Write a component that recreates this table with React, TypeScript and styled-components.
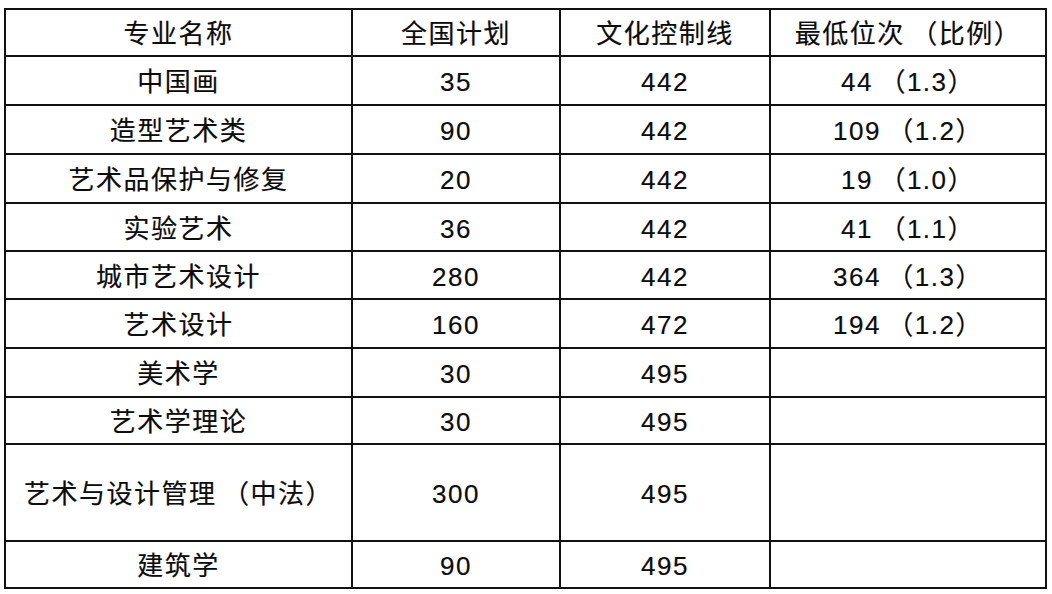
import styled, { createGlobalStyle } from "styled-components";

const GlobalStyle = createGlobalStyle`
  html, body {
    margin: 0;
    padding: 0;
    background: #fff;
  }
  body {
    font-family: "Liberation Sans", "Noto Sans CJK SC", sans-serif;
    color: #0c0c0c;
  }
`;

const Page = styled.div`
  padding: 8px 0 0 4px;
`;

const Table = styled.table`
  width: 1043px;
  table-layout: fixed;
  border-collapse: collapse;
  font-size: 26px;
  letter-spacing: 1.5px;
`;

const Row = styled.tr<{ $h: number }>`
  height: ${(p) => p.$h}px;
`;

const Cell = styled.td`
  border: 2px solid #111;
  padding: 3px 0 0;
  text-align: center;
  vertical-align: middle;
  white-space: nowrap;
  line-height: 1;
  -webkit-text-stroke: 0.2px #0c0c0c;
`;

const HeadCell = styled(Cell).attrs({ as: "th" })`
  font-weight: 400;
`;

const Paren = styled.span`
  margin-left: 0.25em;
`;

const Label = ({ text }: { text: string }) => {
  const i = text.indexOf("（");
  if (i < 0) return <>{text}</>;
  return (
    <>
      {text.slice(0, i)}
      <Paren>{text.slice(i)}</Paren>
    </>
  );
};

type Major = {
  name: string;
  plan: string;
  line: string;
  rank: string;
  h: number;
};

const columns = [347, 208, 210, 276];

const headers = ["专业名称", "全国计划", "文化控制线", "最低位次（比例）"];

const rows: Major[] = [
  { name: "中国画", plan: "35", line: "442", rank: "44（1.3）", h: 49 },
  { name: "造型艺术类", plan: "90", line: "442", rank: "109（1.2）", h: 49 },
  { name: "艺术品保护与修复", plan: "20", line: "442", rank: "19（1.0）", h: 49 },
  { name: "实验艺术", plan: "36", line: "442", rank: "41（1.1）", h: 48 },
  { name: "城市艺术设计", plan: "280", line: "442", rank: "364（1.3）", h: 48 },
  { name: "艺术设计", plan: "160", line: "472", rank: "194（1.2）", h: 49 },
  { name: "美术学", plan: "30", line: "495", rank: "", h: 49 },
  { name: "艺术学理论", plan: "30", line: "495", rank: "", h: 47 },
  { name: "艺术与设计管理（中法）", plan: "300", line: "495", rank: "", h: 97 },
  { name: "建筑学", plan: "90", line: "495", rank: "", h: 47 },
];

export default function App() {
  return (
    <>
      <GlobalStyle />
      <Page lang="zh-CN">
        <Table>
          <colgroup>
            {columns.map((w, i) => (
              <col key={i} style={{ width: w }} />
            ))}
          </colgroup>
          <thead>
            <Row $h={47}>
              {headers.map((h) => (
                <HeadCell key={h}>
                  <Label text={h} />
                </HeadCell>
              ))}
            </Row>
          </thead>
          <tbody>
            {rows.map((r) => (
              <Row key={r.name} $h={r.h}>
                <Cell>
                  <Label text={r.name} />
                </Cell>
                <Cell>{r.plan}</Cell>
                <Cell>{r.line}</Cell>
                <Cell>
                  <Label text={r.rank} />
                </Cell>
              </Row>
            ))}
          </tbody>
        </Table>
      </Page>
    </>
  );
}
